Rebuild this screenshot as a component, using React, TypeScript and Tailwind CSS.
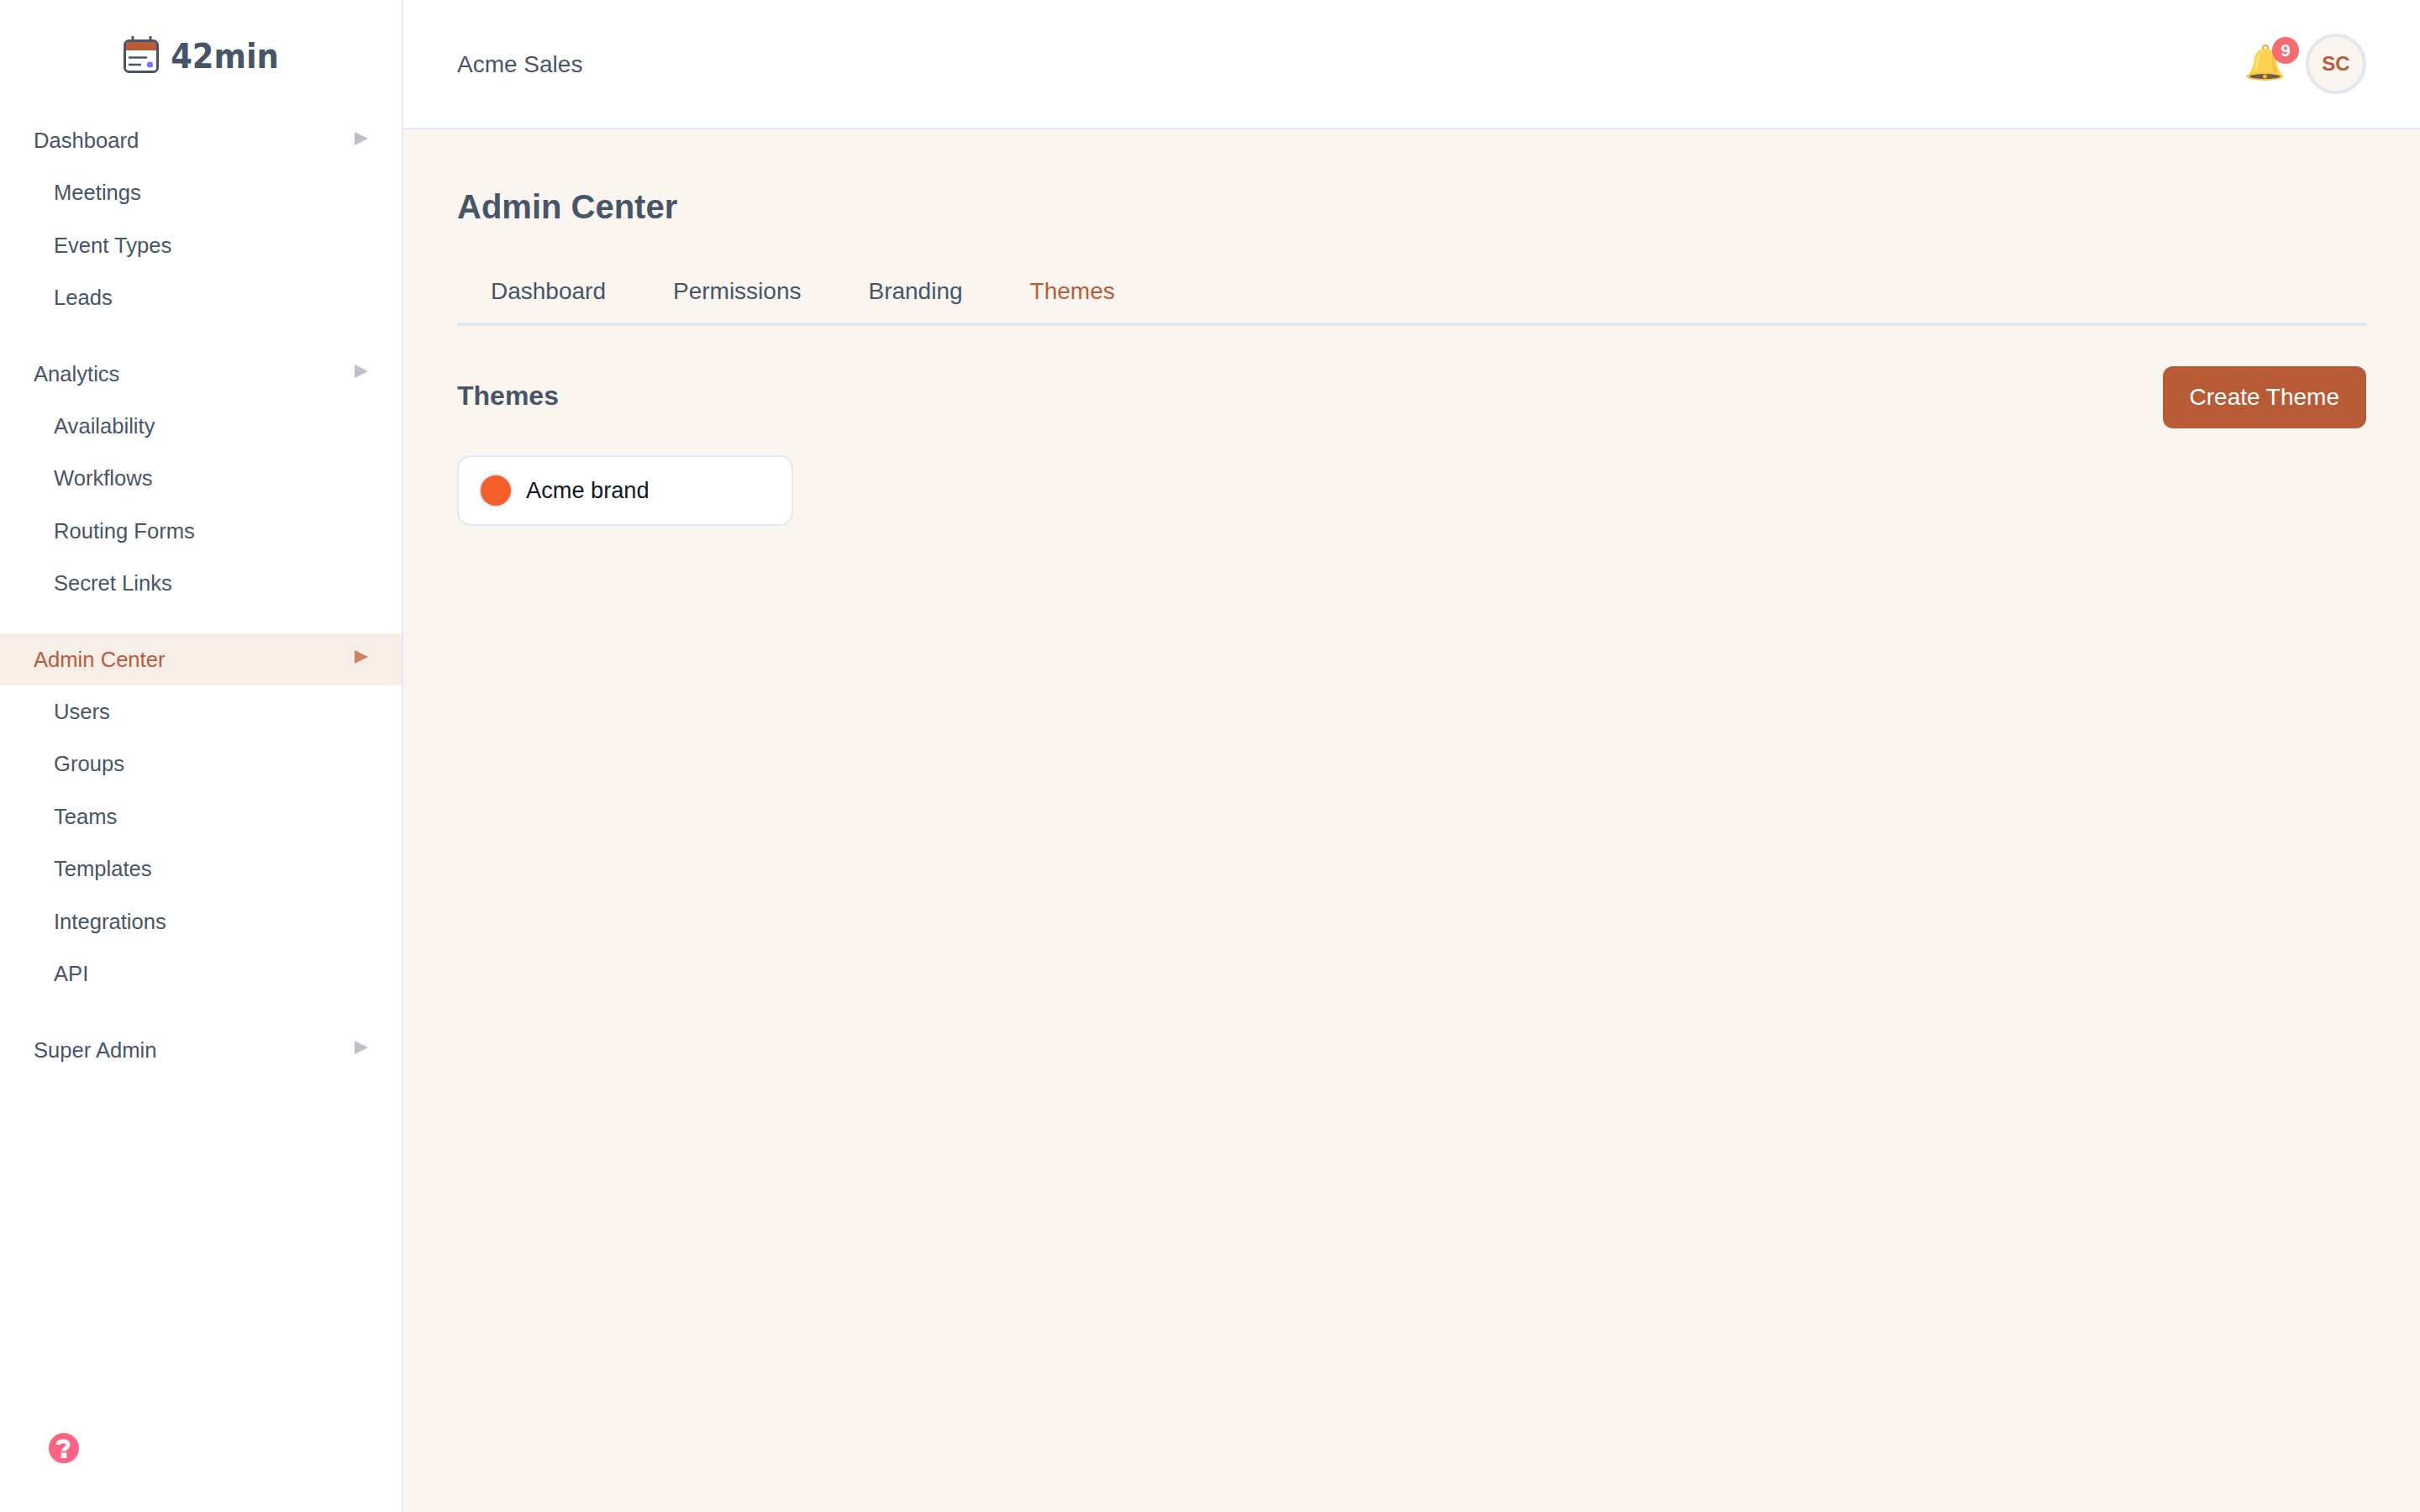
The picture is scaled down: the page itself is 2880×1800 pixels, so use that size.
const navGroups = [
  { label: "Dashboard", items: ["Meetings", "Event Types", "Leads"] },
  { label: "Analytics", items: ["Availability", "Workflows", "Routing Forms", "Secret Links"] },
  { label: "Admin Center", active: true, items: ["Users", "Groups", "Teams", "Templates", "Integrations", "API"] },
  { label: "Super Admin", items: [] },
];

const tabs = ["Dashboard", "Permissions", "Branding", "Themes"];

const Logo = () => (
  <div className="flex h-[130px] mb-[6px] items-center justify-center gap-[13px]">
    <svg width="44" height="44" viewBox="0 0 44 44" fill="none">
      <rect x="2.5" y="5.5" width="39" height="37" rx="5" fill="#ffffff" stroke="#475569" strokeWidth="3" />
      <path d="M4 17V9a2 2 0 0 1 2-2h32a2 2 0 0 1 2 2v8z" fill="#b85c38" />
      <path d="M12 1v5M33 1v5" stroke="#475569" strokeWidth="3" strokeLinecap="round" />
      <path d="M8 25.5h20M8 34h13" stroke="#475569" strokeWidth="2.4" strokeLinecap="round" />
      <circle cx="32.5" cy="34" r="3.6" fill="#7c6cff" />
    </svg>
    <span className="pt-[5px] font-['DejaVu_Sans_Condensed',sans-serif] text-[41px] leading-none font-bold text-[#475569]">42min</span>
  </div>
);

const Arrow = ({ active }: { active?: boolean }) => (
  <svg width="16" height="16" viewBox="0 0 16 16" className="mb-[5px]">
    <polygon points="0,0 16,8 0,16" fill={active ? "#cf8166" : "#bcc0c8"} />
  </svg>
);

const Bell = () => (
  <div className="relative w-[44px] h-[44px] mb-[3px]">
    <svg width="44" height="44" viewBox="0 0 44 44" fill="none">
      <circle cx="23" cy="4" r="3" stroke="#e3aa2c" strokeWidth="1.8" />
      <path d="M23 5c-7 0-12 4-13 11-.9 7-2 13-7 19.500h39.500c-5-6.500-6-12.500-7-19.500-1-7-5.500-11-12.500-11z" fill="#fdd34f" />
      <path d="M13.500 14c-1 6-1.500 12-3.500 17h3c1-5 1-11 3-17 .7-2 2-3.500 3-4.500-3 .5-5 2-5.500 4.500z" fill="#ffe58f" />
      <path d="M31 12c2.500 5 2 13 6 21h-3c-2.500-6-2-14-3-21z" fill="#f2bb3c" />
      <ellipse cx="22.500" cy="38" rx="22" ry="5" fill="#f7c343" />
      <ellipse cx="22.500" cy="38" rx="18" ry="3" fill="#6f5b52" />
      <circle cx="22.500" cy="38" r="2.500" fill="#edb838" />
    </svg>
    <span className="absolute left-[31px] top-[-9px] flex h-8 w-8 items-center justify-center rounded-full bg-[#f56c70] text-[20px] font-bold text-white">
      9
    </span>
  </div>
);

const HelpIcon = () => (
  <svg width="36" height="36" viewBox="0 0 36 36" fill="none">
    <circle cx="18" cy="18" r="18" fill="#ff6384" />
    <path d="M11 14C11 10.500 14 9.700 17.500 9.700C21 9.700 23 11.500 23 14C23 18 18 17.500 18 21.500" stroke="#ffffff" strokeWidth="5" />
    <rect x="14.700" y="23.300" width="6.600" height="6.700" fill="#ffffff" />
  </svg>
);

export default function App() {
  return (
    <div className="flex h-screen font-['Liberation_Sans',Arial,sans-serif] text-[#475569]">
      <aside className="flex w-[480px] shrink-0 flex-col border-r-2 border-[#e2e8f0] bg-white">
        <Logo />
        <nav className="flex flex-col gap-7">
          {navGroups.map((group) => (
            <div key={group.label}>
              <div
                className={
                  group.active
                    ? "flex items-center justify-between bg-[#f8eee8] py-3 pl-[40px] pr-[40px] text-[25.6px] leading-[38.4px] text-[#b85c38]"
                    : "flex items-center justify-between py-3 pl-[40px] pr-[40px] text-[25.6px] leading-[38.4px]"
                }
              >
                <span>{group.label}</span>
                <Arrow active={group.active} />
              </div>
              {group.items.map((item) => (
                <div key={item} className="py-3 pl-[64px] text-[25.6px] leading-[38.4px]">
                  {item}
                </div>
              ))}
            </div>
          ))}
        </nav>
        <div className="mt-auto pb-[58px] pl-[58px]">
          <HelpIcon />
        </div>
      </aside>

      <div className="flex min-w-0 flex-1 flex-col">
        <header className="flex h-[154px] shrink-0 items-center justify-between border-b-2 border-[#e2e8f0] bg-white px-16">
          <span className="pt-[2px] text-[28px]">Acme Sales</span>
          <div className="flex items-center gap-[27px]">
            <Bell />
            <div className="flex h-[72px] w-[72px] items-center justify-center rounded-full border-4 border-[#e2e8f0] bg-[#faf5ef] text-[24px] font-bold text-[#b85c38]">
              SC
            </div>
          </div>
        </header>

        <main className="flex-1 bg-[#faf5ef] px-16 pt-[68px]">
          <h1 className="mb-10 text-[40px] leading-[48px] font-bold">Admin Center</h1>

          <div className="mb-12 flex border-b-4 border-[#e2e8f0]">
            {tabs.map((tab) => (
              <div
                key={tab}
                className={
                  tab === "Themes"
                    ? "px-10 py-4 text-[28px] leading-[42px] text-[#b85c38]"
                    : "px-10 py-4 text-[28px] leading-[42px]"
                }
              >
                {tab}
              </div>
            ))}
          </div>

          <div className="mb-8 flex items-start justify-between">
            <h2 className="pt-[11px] text-[32px] leading-[48px] font-bold">Themes</h2>
            <button className="rounded-xl bg-[#b85c38] px-8 py-4 text-[28px] leading-[42px] text-white">
              Create Theme
            </button>
          </div>

          <div className="flex w-[400px] items-center gap-4 rounded-2xl border-2 border-[#e2e8f0] bg-white px-6 py-5">
            <span className="h-10 w-10 rounded-full border-2 border-[#e2e8f0] bg-[#f55f2c]" />
            <span className="text-[27.2px] leading-10 text-[#0f172a]">Acme brand</span>
          </div>
        </main>
      </div>
    </div>
  );
}
